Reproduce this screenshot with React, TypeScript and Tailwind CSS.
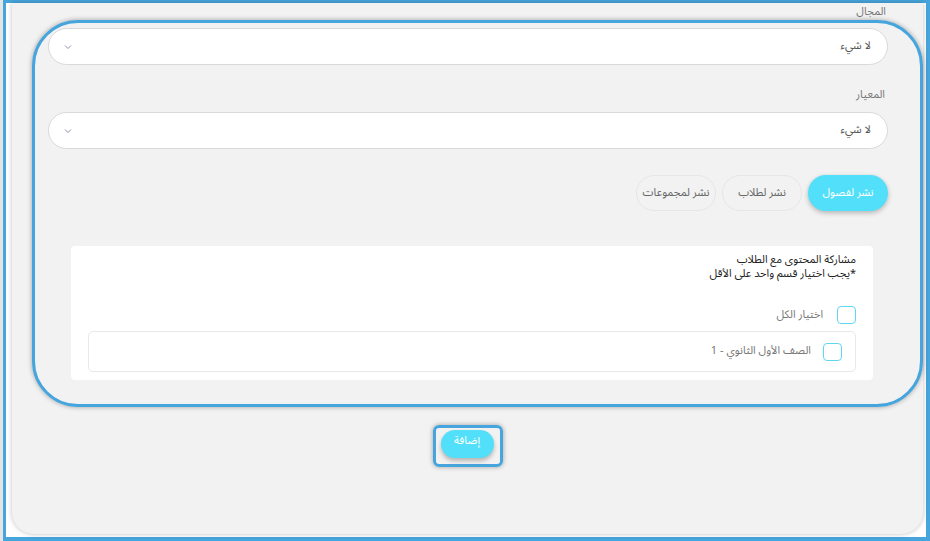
import React from "react";

const font = { fontFamily: '"Noto Sans Arabic", "Noto Sans", sans-serif' };

function Chevron() {
  return (
    <svg width="8" height="6" viewBox="0 0 8 6" className="block">
      <path d="M1 1.5 L4 4.5 L7 1.5" fill="none" stroke="#8a93a6" strokeWidth="1" />
    </svg>
  );
}

function SelectBox() {
  return (
    <div className="flex h-[37px] items-center justify-between rounded-full border border-[#d9d9d9] bg-white pl-[15px] pr-[16px]">
      <span className="text-[11px] text-[#555]">لا شيء</span>
      <Chevron />
    </div>
  );
}

function Checkbox() {
  return <div className="h-[18px] w-[19px] rounded-[4px] border-[1.5px] border-[#5fd6f4] bg-white" />;
}

export default function App() {
  return (
    <div dir="rtl" style={font} className="h-[541px] w-[930px] overflow-hidden bg-[#e4e4e4] pl-[3px]">
      <div className="flex h-[541px] w-[927px] flex-col border-[3px] border-b-[4px] border-r-[4px] border-[#46a5dc] bg-white">
        <div className="ml-[6px] mr-[3px] flex h-[531px] flex-col rounded-b-[22px] bg-[#f2f2f2] shadow-[0_0_5px_rgba(0,0,0,0.25)]">
          <div className="h-[17px] pr-[37px] text-[11px] leading-[17px] text-[#777]">المجال</div>
          <div className="ml-[20px] mr-[0px] flex h-[387px] flex-col rounded-[46px] border-[3px] border-[#46a5dc] pb-[10px] pl-[13px] pr-[32px] pt-[5px] shadow-[0_0_5px_rgba(0,0,0,0.35)]">
            <SelectBox />
            <div className="mt-[23px] h-[24px] pr-[3px] text-[11px] leading-[14px] text-[#777]">المعيار</div>
            <SelectBox />
            <div className="mt-[26px] flex gap-[6px]">
              <button className="h-[36px] w-[80px] rounded-full bg-[#52dff9] text-[11px] text-white shadow-[0_2px_5px_rgba(0,0,0,0.25)]">نشر لفصول</button>
              <button className="h-[36px] w-[80px] rounded-full border border-[#e6e6e6] text-[11px] text-[#666]">نشر لطلاب</button>
              <button className="h-[36px] w-[80px] rounded-full border border-[#e6e6e6] text-[11px] text-[#666]">نشر لمجموعات</button>
            </div>
            <div className="ml-[23px] mr-[15px] mt-[35px] flex flex-col rounded-[4px] bg-white pb-[8px] pl-[17px] pr-[17px] pt-[7px]">
              <div className="text-[11px] leading-[14px] text-[#222]">مشاركة المحتوى مع الطلاب</div>
              <div className="text-[11px] leading-[14px] text-[#222]">*يجب اختيار قسم واحد على الأقل</div>
              <div className="mt-[25px] flex items-center gap-[14px]">
                <Checkbox />
                <span className="text-[11px] text-[#777]">اختيار الكل</span>
              </div>
              <div className="mt-[7px] flex h-[41px] items-center gap-[12px] rounded-[5px] border border-[#e8e8e8] pr-[13px]">
                <Checkbox />
                <span className="text-[11px] text-[#777]">الصف الأول الثانوي - 1</span>
              </div>
            </div>
          </div>
          <div className="mt-[18px] flex justify-center">
            <div className="flex h-[42px] w-[70px] justify-start rounded-[6px] border-[3px] border-[#46a5dc] pr-[6px] pt-[2px] shadow-[0_0_5px_rgba(0,0,0,0.35)]">
              <button className="h-[28px] w-[53px] rounded-full bg-[#52dff9] pb-[6px] text-[11px] text-white shadow-[0_3px_4px_rgba(0,0,0,0.25)]">إضافة</button>
            </div>
          </div>
        </div>
      </div>
    </div>
  );
}
